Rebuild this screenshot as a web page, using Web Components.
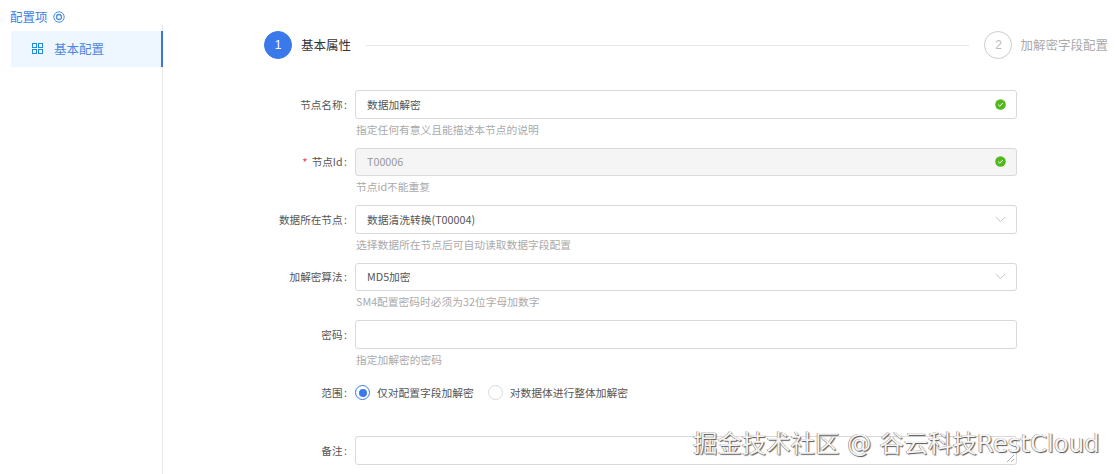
<!DOCTYPE html>
<html lang="zh"><head><meta charset="utf-8"><title>配置</title>
<style>
html,body{margin:0;height:100%;overflow:hidden;background:#fff}
body{font-family:"Noto Sans CJK SC","Noto Sans",sans-serif;font-size:10.75px;color:#444;position:relative}
app-shell{height:474px}
</style></head><body>
<app-shell>
  <side-bar slot="side" heading="配置项">
    <side-item>基本配置</side-item>
  </side-bar>
  <step-bar>
    <step-node num="1" active>基本属性</step-node>
    <step-node num="2">加解密字段配置</step-node>
  </step-bar>
  <form-list>
    <form-field label="节点名称" help="指定任何有意义且能描述本节点的说明"><text-box value="数据加解密" status="ok"></text-box></form-field>
    <form-field label="节点Id" required help="节点id不能重复"><text-box value="T00006" status="ok" disabled></text-box></form-field>
    <form-field label="数据所在节点" help="选择数据所在节点后可自动读取数据字段配置"><text-box value="数据清洗转换(T00004)" status="select"></text-box></form-field>
    <form-field label="加解密算法" help="SM4配置密码时必须为32位字母加数字"><text-box value="MD5加密" status="select"></text-box></form-field>
    <form-field label="密码" help="指定加解密的密码"><text-box></text-box></form-field>
    <form-field label="范围" compact>
      <radio-opt checked>仅对配置字段加解密</radio-opt>
      <radio-opt>对数据体进行整体加解密</radio-opt>
    </form-field>
    <form-field label="备注"><text-box resize></text-box></form-field>
  </form-list>
</app-shell>
<water-mark>掘金技术社区 @ 谷云科技RestCloud</water-mark>
<script>
function def(name, css, html){
  customElements.define(name, class extends HTMLElement{
    connectedCallback(){
      if(this.shadowRoot) return;
      const r=this.attachShadow({mode:"open"});
      r.innerHTML="<style>"+css+"</style>"+(typeof html==="function"?html(this):html);
    }
  });
}
const esc=s=>(s||"").replace(/&/g,"&amp;").replace(/</g,"&lt;");
def("app-shell",
 ":host{display:flex;align-items:stretch;width:1115px;overflow:hidden}.side{flex:0 0 163px}.main{flex:1;min-width:0;padding:31px 7px 0 101px;box-sizing:border-box}",
 '<div class="side"><slot name="side"></slot></div><div class="main"><slot></slot></div>');
def("side-bar",
 ":host{display:flex;flex-direction:column;height:100%;padding-left:10px;box-sizing:border-box;color:#3d7fe6}"+
 ".h{display:flex;align-items:center;gap:5px;height:25px;padding-top:9px;padding-bottom:1px;box-sizing:border-box;font-size:12.5px;line-height:15px}"+
 ".b{flex:1;border-right:1px solid #e6e6e6;padding-top:6px}svg{display:block}",
 el=>`<div class="h">${esc(el.getAttribute("heading"))}<svg width="12" height="12" viewBox="0 0 12 12" fill="none" stroke="#4a90e2"><circle cx="6" cy="6" r="5.2" stroke-width="1"/><circle cx="6" cy="6" r="2.5" stroke-width="1.3"/></svg></div><div class="b"><slot></slot></div>`);
def("side-item",
 ":host{display:flex;align-items:center;gap:11px;height:36px;margin:0 -1px 0 1px;padding:0 0 1px 21px;box-sizing:border-box;background:#eef6ff;border-right:2px solid #3f74cf;font-size:12.5px;color:#4d86e0}svg{display:block}",
 '<svg width="11" height="11" viewBox="0 0 11 11" fill="none" stroke="#1d8ae8" stroke-width="1"><rect x=".5" y=".5" width="4" height="4"/><rect x="6.5" y=".5" width="4" height="4"/><rect x=".5" y="6.5" width="4" height="4"/><rect x="6.5" y="6.5" width="4" height="4"/></svg><slot></slot>');
def("step-bar",
 ":host{display:flex;align-items:center;height:28px}::slotted(step-node:first-child){flex:1}",
 "<slot></slot>");
def("step-node",
 ":host{display:flex;align-items:center;font-size:12.5px;color:#aaa}:host([active]){color:#333}"+
 ".c{flex:none;width:28px;height:28px;border-radius:50%;border:1px solid #ccc;box-sizing:border-box;display:flex;align-items:center;justify-content:center;font:12px 'Liberation Sans',sans-serif;color:#bbb;margin-right:8px}"+
 ":host([active]) .c{background:#3b78ea;border-color:#3b78ea;color:#fff;margin-right:9px}"+
 ".t{white-space:nowrap;padding-bottom:2px}.l{display:none}:host([active]) .l{display:block;flex:1;height:1px;background:#e6e6e6;margin:0 15px}",
 el=>`<span class="c">${esc(el.getAttribute("num"))}</span><span class="t"><slot></slot></span><span class="l"></span>`);
def("form-list",":host{display:block;padding-top:31px}","<slot></slot>");
def("form-field",
 ":host{display:grid;grid-template-columns:83px 662px;column-gap:8px;height:57.5px;align-items:start;color:#555}"+
 ":host([compact]){margin-top:7.5px;height:51px}"+
 ".lab{display:flex;justify-content:flex-end;align-items:center;height:28.5px;white-space:nowrap;font-size:10.6px}"+
 ".req{color:#f0406a;margin-right:4px;font-size:11.5px}.col{margin-left:1.5px;color:#666}"+
 ":host([compact]) .lab{height:15px}"+
 ".ctl{display:flex;flex-direction:column}:host([compact]) .ctl{flex-direction:row;gap:14px}"+
 ".help{margin:2px 0 0 1px;height:17px;line-height:17px;color:#aaa}",
 el=>`<div class="lab">${el.hasAttribute("required")?'<span class="req">*</span>':''}${esc(el.getAttribute("label"))}<span class="col">:</span></div><div class="ctl"><slot></slot>${el.hasAttribute("help")?`<div class="help">${esc(el.getAttribute("help"))}</div>`:''}</div>`);
def("text-box",
 ":host{display:flex;align-items:center;height:28.5px;box-sizing:border-box;border:1px solid #d9d9d9;border-radius:3px;background:#fff;padding:0 10px 0 11px;color:#555;position:relative}"+
 ":host([disabled]){background:#f5f5f5;color:#999}.v{flex:1;white-space:nowrap}svg{display:block;flex:none}"+
 ".rz{position:absolute;right:1px;bottom:1px}",
 el=>{const s=el.getAttribute("status");
  let ic="";
  if(s==="ok")ic='<svg width="11" height="11" viewBox="0 0 11 11"><circle cx="5.5" cy="5.5" r="5.3" fill="#52b81c"/><path d="M3.2 5.6l1.6 1.6 3-3.2" fill="none" stroke="#fff" stroke-width="1"/></svg>';
  if(s==="select")ic='<svg width="11" height="7" viewBox="0 0 11 7"><path d="M.8 1l4.7 4.7L10.2 1" fill="none" stroke="#c4c4c4" stroke-width="1"/></svg>';
  const rz=el.hasAttribute("resize")?'<svg class="rz" width="9" height="9" viewBox="0 0 9 9"><path d="M1 8L8 1M5 8l3-3" stroke="#999" stroke-width=".8"/></svg>':'';
  return `<span class="v">${esc(el.getAttribute("value"))}</span>${ic}${rz}`;});
def("radio-opt",
 ":host{display:inline-flex;align-items:center;gap:7px;color:#555;white-space:nowrap;height:15px}"+
 ".o{width:15px;height:15px;box-sizing:border-box;border:1px solid #d9d9d9;border-radius:50%;display:flex;align-items:center;justify-content:center}"+
 ":host([checked]) .o{border-color:#3b78ea}:host([checked]) .o::after{content:'';width:8px;height:8px;border-radius:50%;background:#3b78ea}",
 '<span class="o"></span><slot></slot>');
def("water-mark",
 ":host{position:absolute;left:693px;top:426px;font-family:'DejaVu Sans','Noto Sans CJK SC',sans-serif;font-size:24.4px;line-height:36px;white-space:nowrap;color:#f4f4f4;text-shadow:1px 1px 1px #555,-.5px -.5px .5px #777;pointer-events:none}",
 "<slot></slot>");
</script>
</body></html>
